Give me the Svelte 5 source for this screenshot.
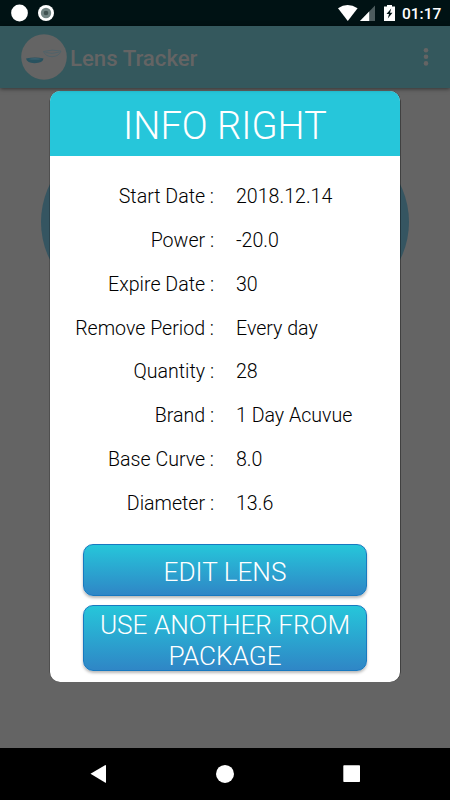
<script lang="ts">
	type Detail = { label: string; value: string };

	const details: Detail[] = [
		{ label: 'Start Date', value: '2018.12.14' },
		{ label: 'Power', value: '-20.0' },
		{ label: 'Expire Date', value: '30' },
		{ label: 'Remove Period', value: 'Every day' },
		{ label: 'Quantity', value: '28' },
		{ label: 'Brand', value: '1 Day Acuvue' },
		{ label: 'Base Curve', value: '8.0' },
		{ label: 'Diameter', value: '13.6' }
	];
</script>

<div class="screen">
	<div class="status-bar">
		<svg class="status-bar__left" width="60" height="26" viewBox="0 0 60 26">
			<circle cx="19.5" cy="13" r="8.4" fill="#fff" />
			<circle cx="46" cy="13" r="8" fill="#fff" />
			<circle cx="46" cy="13" r="5.2" fill="#738584" />
			<circle cx="46" cy="13" r="2.3" fill="#415251" />
		</svg>
		<svg class="status-bar__right" width="62" height="26" viewBox="0 0 62 26">
			<path d="M0 8.3 Q9.5 1.8 19.6 8.3 L9.8 21Z" fill="#fff" />
			<path d="M22 21 L37 5.5 V21Z" fill="#4d5c5e" />
			<path d="M22 21 L31.2 11.5 V21Z" fill="#fff" />
			<path d="M46 6.5H49V5H54V6.5H57V21H46Z" fill="#fff" />
			<path d="M53.2 8.5L48.5 14H51L49.8 18.6L54.5 12.8H52Z" fill="#001214" />
		</svg>
		<time>01:17</time>
	</div>

	<header class="app-bar">
		<svg width="46" height="46" viewBox="0 0 46 46">
			<circle cx="23" cy="23" r="22.8" fill="#646464" />
			<path d="M5 24.5Q14 22.5 22.5 24.5Q22 29 13.5 29.2Q6 29 5 24.5Z" fill="#28525f" />
			<path d="M7 25Q14 23.7 21 25Q14 26 7 25Z" fill="#416574" />
			<path
				d="M22.5 17.5Q31 15 40 17Q38 22.5 31 22.7Q24.5 22.5 22.5 17.5ZM24.5 18.5Q31 20.5 38.5 18"
				fill="none"
				stroke="#4b626b"
				stroke-width=".8"
			/>
		</svg>
		<h1>Lens Tracker</h1>
		<svg class="app-bar__menu" width="6" height="20" viewBox="0 0 6 20">
			<circle cx="3" cy="3.2" r="2.3" fill="#646464" />
			<circle cx="3" cy="9.8" r="2.3" fill="#646464" />
			<circle cx="3" cy="16.4" r="2.3" fill="#646464" />
		</svg>
	</header>

	<main>
		<div class="lens lens--left"></div>
		<div class="lens lens--right"></div>

		<section class="dialog" role="dialog" aria-labelledby="dialog-title">
			<h2 id="dialog-title">INFO RIGHT</h2>
			<dl>
				{#each details as detail (detail.label)}
					<div class="detail">
						<dt>{detail.label} :</dt>
						<dd>{detail.value}</dd>
					</div>
				{/each}
			</dl>
			<div class="actions">
				<button type="button">EDIT LENS</button>
				<button class="tall" type="button">USE ANOTHER FROM PACKAGE</button>
			</div>
		</section>
	</main>

	<nav class="nav-bar">
		<svg width="450" height="52" viewBox="0 0 450 52">
			<path d="M90.5 25.8L105 17.2Q106 16.8 106 17.6V34.2Q106 35.2 105 34.6Z" fill="#fff" />
			<circle cx="225" cy="25.9" r="9" fill="#fff" />
			<rect x="343.3" y="17.3" width="16.7" height="16.7" rx=".7" fill="#fff" />
		</svg>
	</nav>
</div>

<style>
	:global(body) {
		margin: 0;
	}

	.screen {
		display: flex;
		flex-direction: column;
		width: 450px;
		height: 800px;
		overflow: hidden;
		background: #646464;
		font-family: Roboto, sans-serif;
	}

	.status-bar {
		display: flex;
		align-items: center;
		height: 26px;
		flex: none;
		background: #001214;
		color: #fff;
	}

	.status-bar__right {
		margin-left: 278px;
	}

	time {
		margin-left: 2px;
		font-size: 15.5px;
		font-weight: 500;
		line-height: 26px;
		padding-top: 1px;
		box-sizing: border-box;
		height: 26px;
	}

	.app-bar {
		display: flex;
		align-items: center;
		flex: none;
		height: 62px;
		padding: 0 21px;
		background: #34585d;
		color: #646464;
		box-shadow: 0 1px 4px rgba(0, 0, 0, 0.5);
		z-index: 1;
	}

	h1 {
		margin: 1px 0 0 3px;
		font-size: 22.2px;
		font-weight: 500;
	}

	.app-bar__menu {
		margin-left: auto;
	}

	main {
		position: relative;
		flex: 1;
		padding: 3px 50px 0;
	}

	.lens {
		position: absolute;
		top: 49px;
		width: 170px;
		height: 170px;
		border-radius: 50%;
		background: #355561;
	}

	.lens--left {
		left: 41px;
	}

	.lens--right {
		right: 41px;
	}

	.dialog {
		position: relative;
		height: 591px;
		border-radius: 10px;
		overflow: hidden;
		background: #fff;
		color: #000;
		box-shadow:
			0.6px 0 0 rgba(0, 0, 0, 0.6),
			-0.4px 0 0 rgba(0, 0, 0, 0.5);
	}

	h2 {
		height: 65px;
		margin: 0;
		background: #26c6da;
		color: #fff;
		font-size: 38.2px;
		font-weight: 300;
		line-height: 70px;
		text-align: center;
	}

	dl {
		margin: 19.3px 0 0;
		font-size: 19.6px;
		font-weight: 300;
	}

	.detail {
		display: grid;
		grid-template-columns: 164px 1fr;
		column-gap: 22px;
		height: 43.75px;
		line-height: 44px;
	}

	dt {
		text-align: right;
	}

	dd {
		margin: 0;
	}

	.actions {
		display: flex;
		flex-direction: column;
		gap: 9px;
		padding: 19.1px 33px 0;
	}

	button {
		height: 52px;
		padding: 4px 10px 0;
		border: 1px solid #1879c0;
		border-radius: 10px;
		background: linear-gradient(#26c6da, #2f86c6);
		box-shadow: 0 2px 3px rgba(0, 0, 0, 0.28);
		color: #fff;
		font: 300 26.2px/31px Roboto, sans-serif;
	}

	.tall {
		height: 66px;
	}

	.nav-bar {
		flex: none;
		height: 52px;
		background: #000;
	}

	.nav-bar svg {
		display: block;
	}
</style>
